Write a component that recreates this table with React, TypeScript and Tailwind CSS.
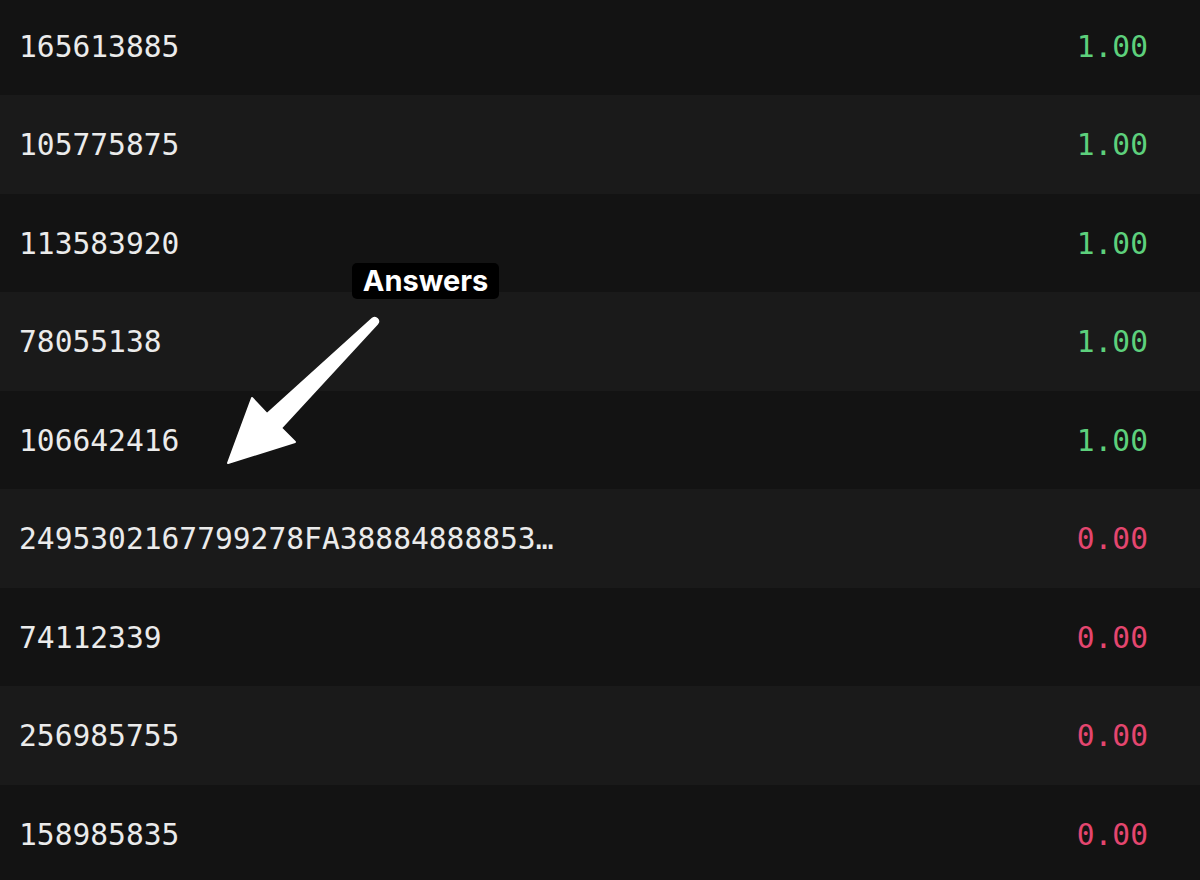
import React from "react";

const rows: { id: string; value: string; ok: boolean }[] = [
  { id: "165613885", value: "1.00", ok: true },
  { id: "105775875", value: "1.00", ok: true },
  { id: "113583920", value: "1.00", ok: true },
  { id: "78055138", value: "1.00", ok: true },
  { id: "106642416", value: "1.00", ok: true },
  { id: "2495302167799278FA38884888853", value: "0.00", ok: false },
  { id: "74112339", value: "0.00", ok: false },
  { id: "256985755", value: "0.00", ok: false },
  { id: "158985835", value: "0.00", ok: false },
];

export default function App() {
  return (
    <div className="relative w-[1200px] h-[880px] overflow-hidden bg-[#131313]">
      <div className="-mt-[3.5px] flex flex-col" style={{ fontFamily: '"DejaVu Sans Mono", monospace' }}>
        {rows.map((r, i) => (
          <div
            key={i}
            className={`flex h-[98.5px] shrink-0 items-center justify-between pl-[19px] pr-[52px] pt-[4px] text-[29.6px] leading-none ${
              i % 2 === 0 ? "bg-[#131313]" : "bg-[#1a1a1a]"
            }`}
          >
            <span className="text-[#ebebeb]">{r.id.length > 20 ? r.id + "…" : r.id}</span>
            <span className={r.ok ? "text-[#5dd07c]" : "text-[#e4466f]"}>{r.value}</span>
          </div>
        ))}
      </div>

      <div
        className="absolute left-[352px] top-[263px] flex h-[36px] w-[147px] items-center justify-center rounded-[5px] bg-black text-[29px] font-bold text-white"
        style={{ fontFamily: 'Inter, "Liberation Sans", sans-serif' }}
      >
        Answers
      </div>

      <svg className="pointer-events-none absolute left-0 top-0" width="1200" height="880" viewBox="0 0 1200 880">
        <path
          d="M 372.6 318.5 L 267 414 L 252 398 L 228 463 L 295 442 L 281 428 L 377.4 323.5 A 3.5 3.5 0 0 0 372.6 318.5 Z"
          fill="#ffffff"
          stroke="#ffffff"
          strokeWidth="2"
          strokeLinejoin="round"
        />
      </svg>
    </div>
  );
}
